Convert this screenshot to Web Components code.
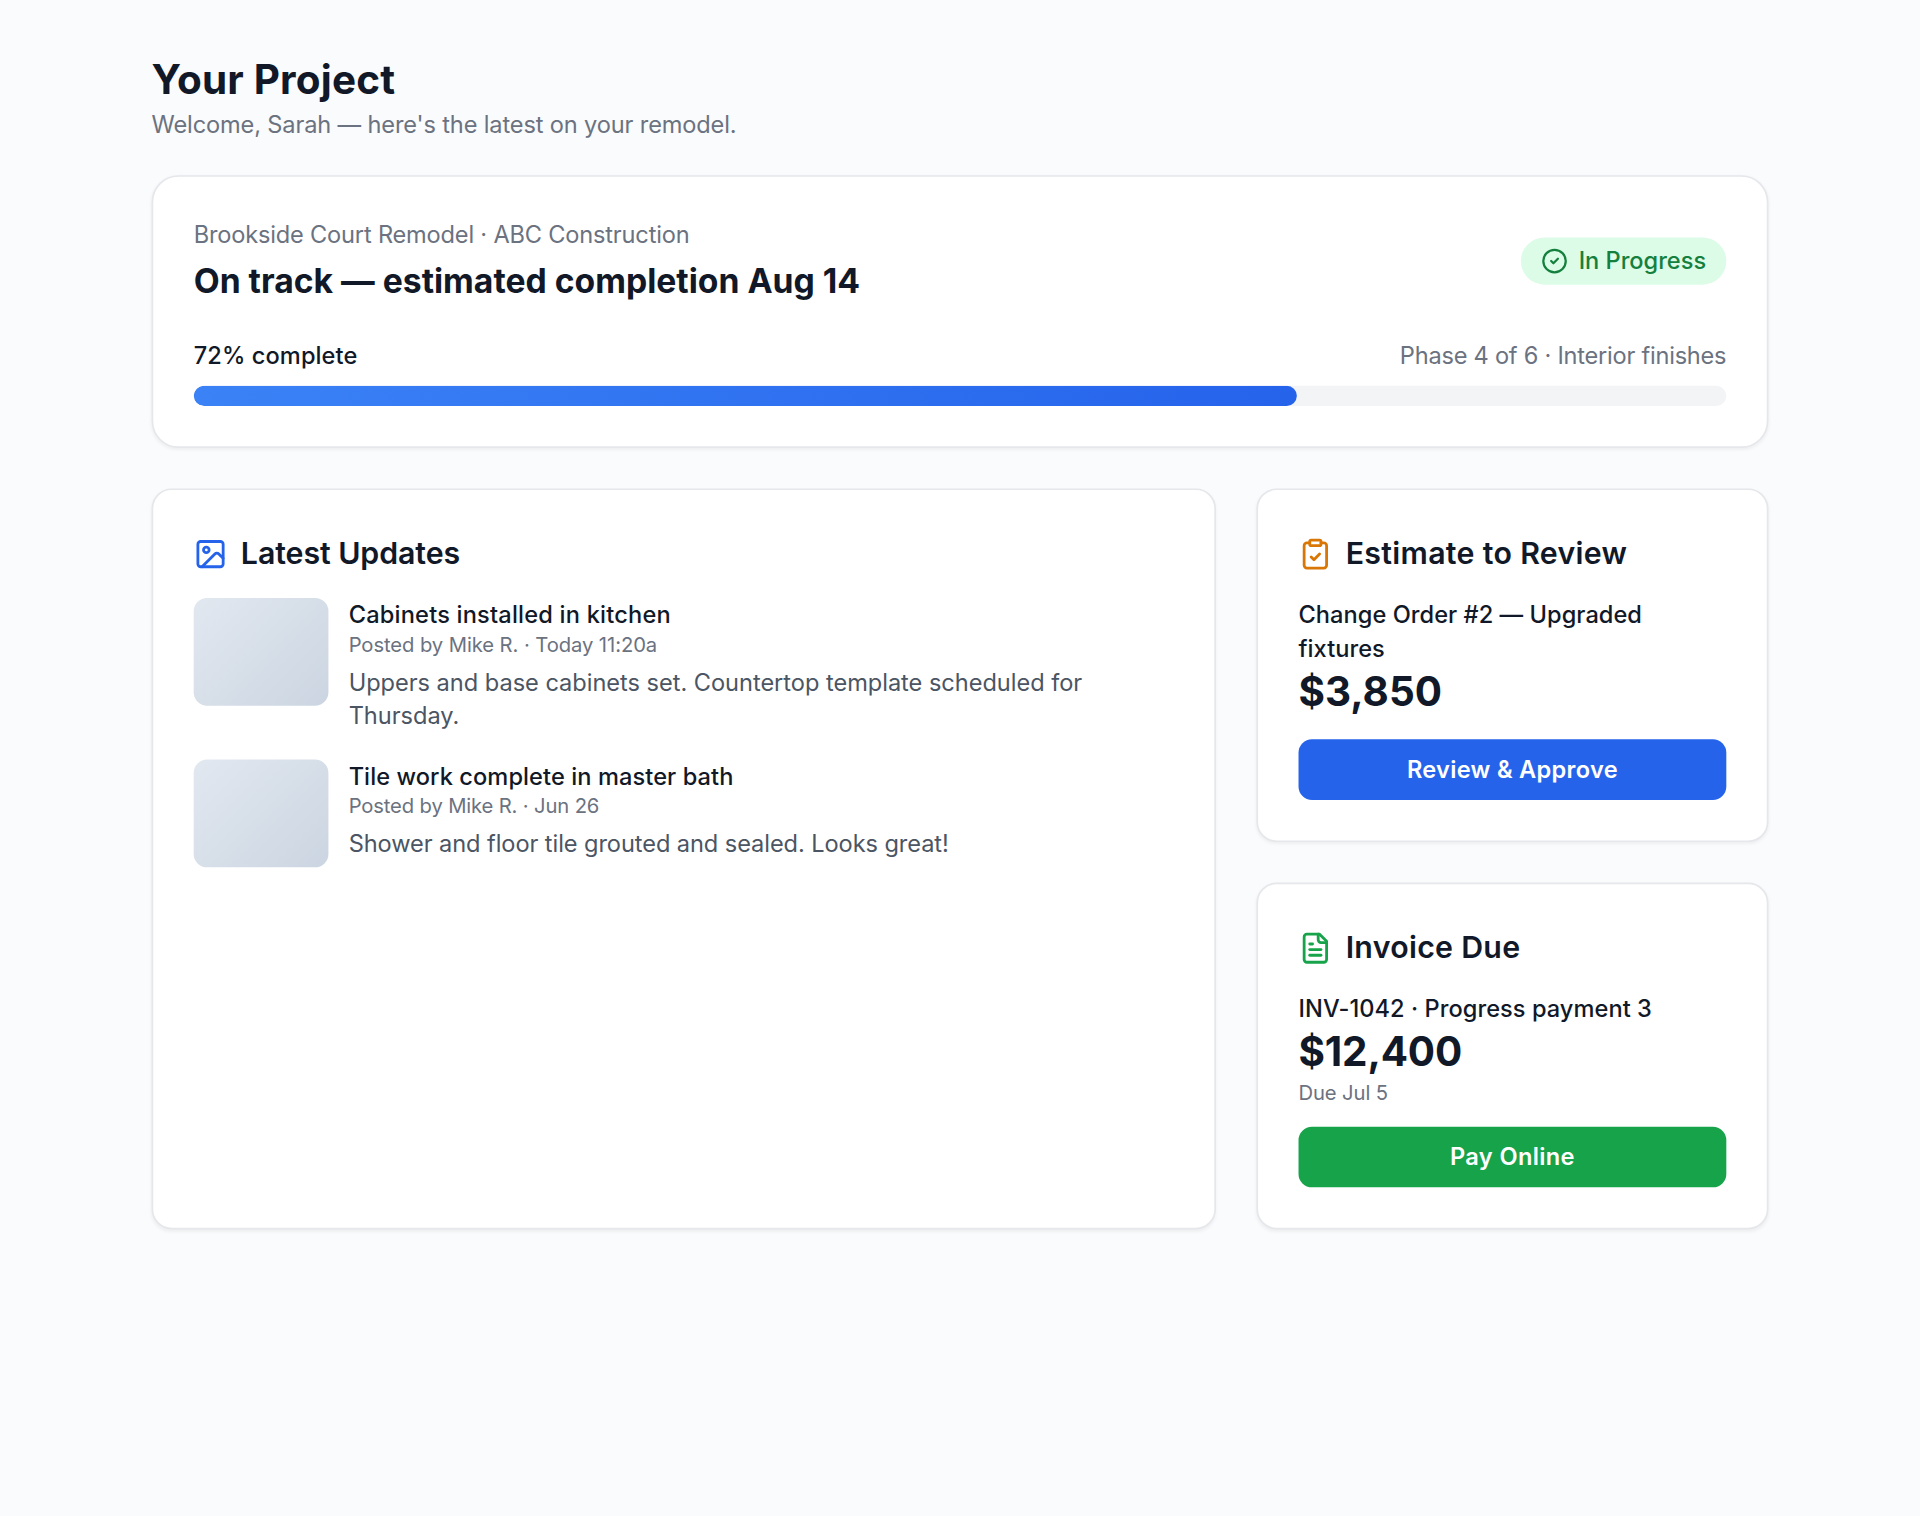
<!DOCTYPE html>
<html lang="en">
<head>
<meta charset="UTF-8">
<meta name="viewport" content="width=device-width, initial-scale=1.0">
<title>Your Project</title>
<style>
    html {
        background: #fafbfc;
    }

    /* 1140px design, enlarged to fill the window */
    body {
        width: 1140px;
        height: 900px;
        margin: 0;
        transform: scale(1.68421);
        transform-origin: 0 0;
        font-family: Inter, "Liberation Sans", sans-serif;
        font-size: 0.875rem;
        line-height: 1.25rem;
        color: #111827;
    }
</style>
</head>
<body>
<project-portal heading="Your Project" welcome="Welcome, Sarah — here's the latest on your remodel.">
    <project-status
        slot="status"
        project="Brookside Court Remodel · ABC Construction"
        summary="On track — estimated completion Aug 14"
        badge="In Progress"
        percent="72"
        phase="Phase 4 of 6 · Interior finishes"></project-status>

    <portal-card slot="main" icon="image" heading="Latest Updates" style="--accent: #2563eb; --heading-spacing: -0.05px">
        <update-list>
            <update-item heading="Cabinets installed in kitchen" meta="Posted by Mike R. · Today 11:20a" style="--title-spacing: 0.125px; --meta-spacing: -0.045px; --text-spacing: -0.012px">Uppers and base cabinets set. Countertop template scheduled for Thursday.</update-item>
            <update-item heading="Tile work complete in master bath" meta="Posted by Mike R. · Jun 26" style="--title-spacing: 0.055px; --meta-spacing: -0.08px; --text-spacing: -0.04px">Shower and floor tile grouted and sealed. Looks great!</update-item>
        </update-list>
    </portal-card>

    <portal-card slot="side" icon="clipboard" heading="Estimate to Review" style="--accent: #d97706; --heading-spacing: 0.18px">
        <amount-due label="Change Order #2 — Upgraded fixtures" amount="$3,850" action="Review &amp; Approve" style="--button: #2563eb; --label-spacing: 0.03px; --action-spacing: 0.18px"></amount-due>
    </portal-card>
    <portal-card slot="side" icon="file" heading="Invoice Due" style="--accent: #16a34a; --heading-spacing: 0.165px">
        <amount-due label="INV-1042 · Progress payment 3" amount="$12,400" note="Due Jul 5" action="Pay Online" style="--button: #16a34a; --label-spacing: 0.035px; --amount-spacing: -0.1px; --action-spacing: 0.22px"></amount-due>
    </portal-card>
</project-portal>

<script>
const icons = {
    check: '<circle cx="12" cy="12" r="10"/><path d="m9 12 2 2 4-4"/>',
    image: '<rect width="18" height="18" x="3" y="3" rx="2" ry="2"/><circle cx="9" cy="9" r="2"/><path d="m21 15-3.086-3.086a2 2 0 0 0-2.828 0L6 21"/>',
    clipboard: '<rect width="8" height="4" x="8" y="2" rx="1" ry="1"/><path d="M16 4h2a2 2 0 0 1 2 2v14a2 2 0 0 1-2 2H6a2 2 0 0 1-2-2V6a2 2 0 0 1 2-2h2"/><path d="m9 14 2 2 4-4"/>',
    file: '<path d="M15 2H6a2 2 0 0 0-2 2v16a2 2 0 0 0 2 2h12a2 2 0 0 0 2-2V7Z"/><path d="M14 2v4a2 2 0 0 0 2 2h4"/><path d="M10 9H8"/><path d="M16 13H8"/><path d="M16 17H8"/>'
};

// Line icon, sized by --size and coloured by currentColor
class PortalIcon extends HTMLElement {
    connectedCallback() {
        this.attachShadow({ mode: 'open' });
        this.shadowRoot.innerHTML = `
            <style>
                :host {
                    display: block;
                    flex: none;
                    width: var(--size, 1.25rem);
                    height: var(--size, 1.25rem);
                }

                svg {
                    display: block;
                    width: 100%;
                    height: 100%;
                }
            </style>
            <svg viewBox="0 0 24 24" fill="none" stroke="currentColor" stroke-width="2" stroke-linecap="round" stroke-linejoin="round">${icons[this.getAttribute('name')]}</svg>
        `;
    }
}

// Page shell: heading, status row, then a main and a side column
class ProjectPortal extends HTMLElement {
    connectedCallback() {
        this.attachShadow({ mode: 'open' });
        this.shadowRoot.innerHTML = `
            <style>
                :host {
                    display: block;
                    box-sizing: border-box;
                    max-width: 64rem;
                    margin: 0 auto;
                    padding: 2rem;
                }

                header {
                    margin-bottom: 1.25rem;
                }

                h1 {
                    margin: 0;
                    font-size: 1.5rem;
                    line-height: 2rem;
                    font-weight: 700;
                    letter-spacing: 0.12px;
                }

                p {
                    margin: 0;
                    color: #6b7280;
                    letter-spacing: -0.08px;
                }

                .columns {
                    display: grid;
                    grid-template-columns: repeat(3, minmax(0, 1fr));
                    gap: 1.5rem;
                    margin-top: 1.5rem;
                }

                .main {
                    display: grid;
                    grid-column: span 2;
                }

                .side {
                    display: flex;
                    flex-direction: column;
                    gap: 1.5rem;
                }
            </style>
            <header>
                <h1>${this.getAttribute('heading')}</h1>
                <p>${this.getAttribute('welcome')}</p>
            </header>
            <slot name="status"></slot>
            <div class="columns">
                <div class="main"><slot name="main"></slot></div>
                <div class="side"><slot name="side"></slot></div>
            </div>
        `;
    }
}

// Overall project status with a progress bar
class ProjectStatus extends HTMLElement {
    connectedCallback() {
        const percent = this.getAttribute('percent');

        this.attachShadow({ mode: 'open' });
        this.shadowRoot.innerHTML = `
            <style>
                :host {
                    display: block;
                    padding: 1.5rem;
                    border: 1px solid #e5e7eb;
                    border-radius: 1rem;
                    background: #fff;
                    box-shadow: 0 1px 2px rgba(0, 0, 0, 0.05);
                }

                .top, .labels {
                    display: flex;
                    align-items: center;
                    justify-content: space-between;
                }

                .project, .phase {
                    color: #6b7280;
                }

                .project {
                    letter-spacing: -0.104px;
                }

                .phase {
                    letter-spacing: -0.138px;
                }

                h2 {
                    margin: 0.25rem 0 0;
                    font-size: 1.25rem;
                    line-height: 1.75rem;
                    font-weight: 700;
                }

                .badge {
                    --size: 1rem;
                    display: flex;
                    align-items: center;
                    gap: 0.375rem;
                    padding: 0.25rem 0.75rem;
                    border-radius: 999px;
                    background: #dcfce7;
                    color: #15803d;
                    font-weight: 500;
                }

                .labels {
                    margin: 1.25rem 0 0.5rem;
                }

                .percent {
                    font-weight: 500;
                    letter-spacing: 0.06px;
                }

                .track {
                    height: 0.75rem;
                    overflow: hidden;
                    border-radius: 999px;
                    background: #f3f4f6;
                }

                .fill {
                    width: ${percent}%;
                    height: 100%;
                    border-radius: 999px;
                    background: linear-gradient(90deg, #3b82f6, #2563eb);
                }
            </style>
            <div class="top">
                <div>
                    <div class="project">${this.getAttribute('project')}</div>
                    <h2>${this.getAttribute('summary')}</h2>
                </div>
                <div class="badge"><portal-icon name="check"></portal-icon><span>${this.getAttribute('badge')}</span></div>
            </div>
            <div class="labels">
                <span class="percent">${percent}% complete</span>
                <span class="phase">${this.getAttribute('phase')}</span>
            </div>
            <div class="track"><div class="fill"></div></div>
        `;
    }
}

// Card with an icon heading and slotted content
class PortalCard extends HTMLElement {
    connectedCallback() {
        this.attachShadow({ mode: 'open' });
        this.shadowRoot.innerHTML = `
            <style>
                :host {
                    display: block;
                    padding: 1.5rem;
                    border: 1px solid #e5e7eb;
                    border-radius: 0.75rem;
                    background: #fff;
                    box-shadow: 0 1px 2px rgba(0, 0, 0, 0.05);
                }

                .head {
                    display: flex;
                    align-items: center;
                    gap: 0.5rem;
                    margin-bottom: 0.75rem;
                }

                portal-icon {
                    color: var(--accent);
                }

                h3 {
                    margin: 0;
                    font-size: 1.125rem;
                    line-height: 1.75rem;
                    font-weight: 600;
                    letter-spacing: var(--heading-spacing, 0);
                }
            </style>
            <div class="head">
                <portal-icon name="${this.getAttribute('icon')}"></portal-icon>
                <h3>${this.getAttribute('heading')}</h3>
            </div>
            <slot></slot>
        `;
    }
}

class UpdateList extends HTMLElement {
    connectedCallback() {
        this.attachShadow({ mode: 'open' });
        this.shadowRoot.innerHTML = `
            <style>
                :host {
                    display: flex;
                    flex-direction: column;
                    gap: 1rem;
                }
            </style>
            <slot></slot>
        `;
    }
}

// One posted update with its photo placeholder
class UpdateItem extends HTMLElement {
    connectedCallback() {
        this.attachShadow({ mode: 'open' });
        this.shadowRoot.innerHTML = `
            <style>
                :host {
                    display: flex;
                    align-items: flex-start;
                    gap: 0.75rem;
                }

                .photo {
                    flex: none;
                    width: 5rem;
                    height: 4rem;
                    border-radius: 0.5rem;
                    background: linear-gradient(135deg, #e2e8f0, #cbd5e1);
                }

                .heading {
                    font-weight: 500;
                    letter-spacing: var(--title-spacing, 0);
                }

                .meta {
                    font-size: 0.75rem;
                    line-height: 1rem;
                    color: #6b7280;
                    letter-spacing: var(--meta-spacing, 0);
                }

                .text {
                    margin-top: 0.25rem;
                    color: #4b5563;
                    letter-spacing: var(--text-spacing, 0);
                }
            </style>
            <div class="photo"></div>
            <div>
                <div class="heading">${this.getAttribute('heading')}</div>
                <div class="meta">${this.getAttribute('meta')}</div>
                <div class="text"><slot></slot></div>
            </div>
        `;
    }
}

// Amount with an optional note and a call to action
class AmountDue extends HTMLElement {
    connectedCallback() {
        const note = this.getAttribute('note');

        this.attachShadow({ mode: 'open' });
        this.shadowRoot.innerHTML = `
            <style>
                :host {
                    display: block;
                }

                .label {
                    font-weight: 500;
                    letter-spacing: var(--label-spacing, 0);
                }

                .amount {
                    font-size: 1.5rem;
                    line-height: 2rem;
                    font-weight: 700;
                    letter-spacing: var(--amount-spacing, 0);
                }

                .note {
                    font-size: 0.75rem;
                    line-height: 1rem;
                    color: #6b7280;
                    letter-spacing: -0.06px;
                }

                button {
                    display: block;
                    width: 100%;
                    margin: 0.75rem 0 0;
                    padding: 0.5rem;
                    border: 0;
                    border-radius: 0.5rem;
                    background: var(--button);
                    color: #fff;
                    font: inherit;
                    font-weight: 600;
                    letter-spacing: var(--action-spacing, 0);
                    cursor: pointer;
                }
            </style>
            <div class="label">${this.getAttribute('label')}</div>
            <div class="amount">${this.getAttribute('amount')}</div>
            ${note ? `<div class="note">${note}</div>` : ''}
            <button type="button">${this.getAttribute('action')}</button>
        `;
    }
}

customElements.define('portal-icon', PortalIcon);
customElements.define('project-portal', ProjectPortal);
customElements.define('project-status', ProjectStatus);
customElements.define('portal-card', PortalCard);
customElements.define('update-list', UpdateList);
customElements.define('update-item', UpdateItem);
customElements.define('amount-due', AmountDue);
</script>
</body>
</html>
